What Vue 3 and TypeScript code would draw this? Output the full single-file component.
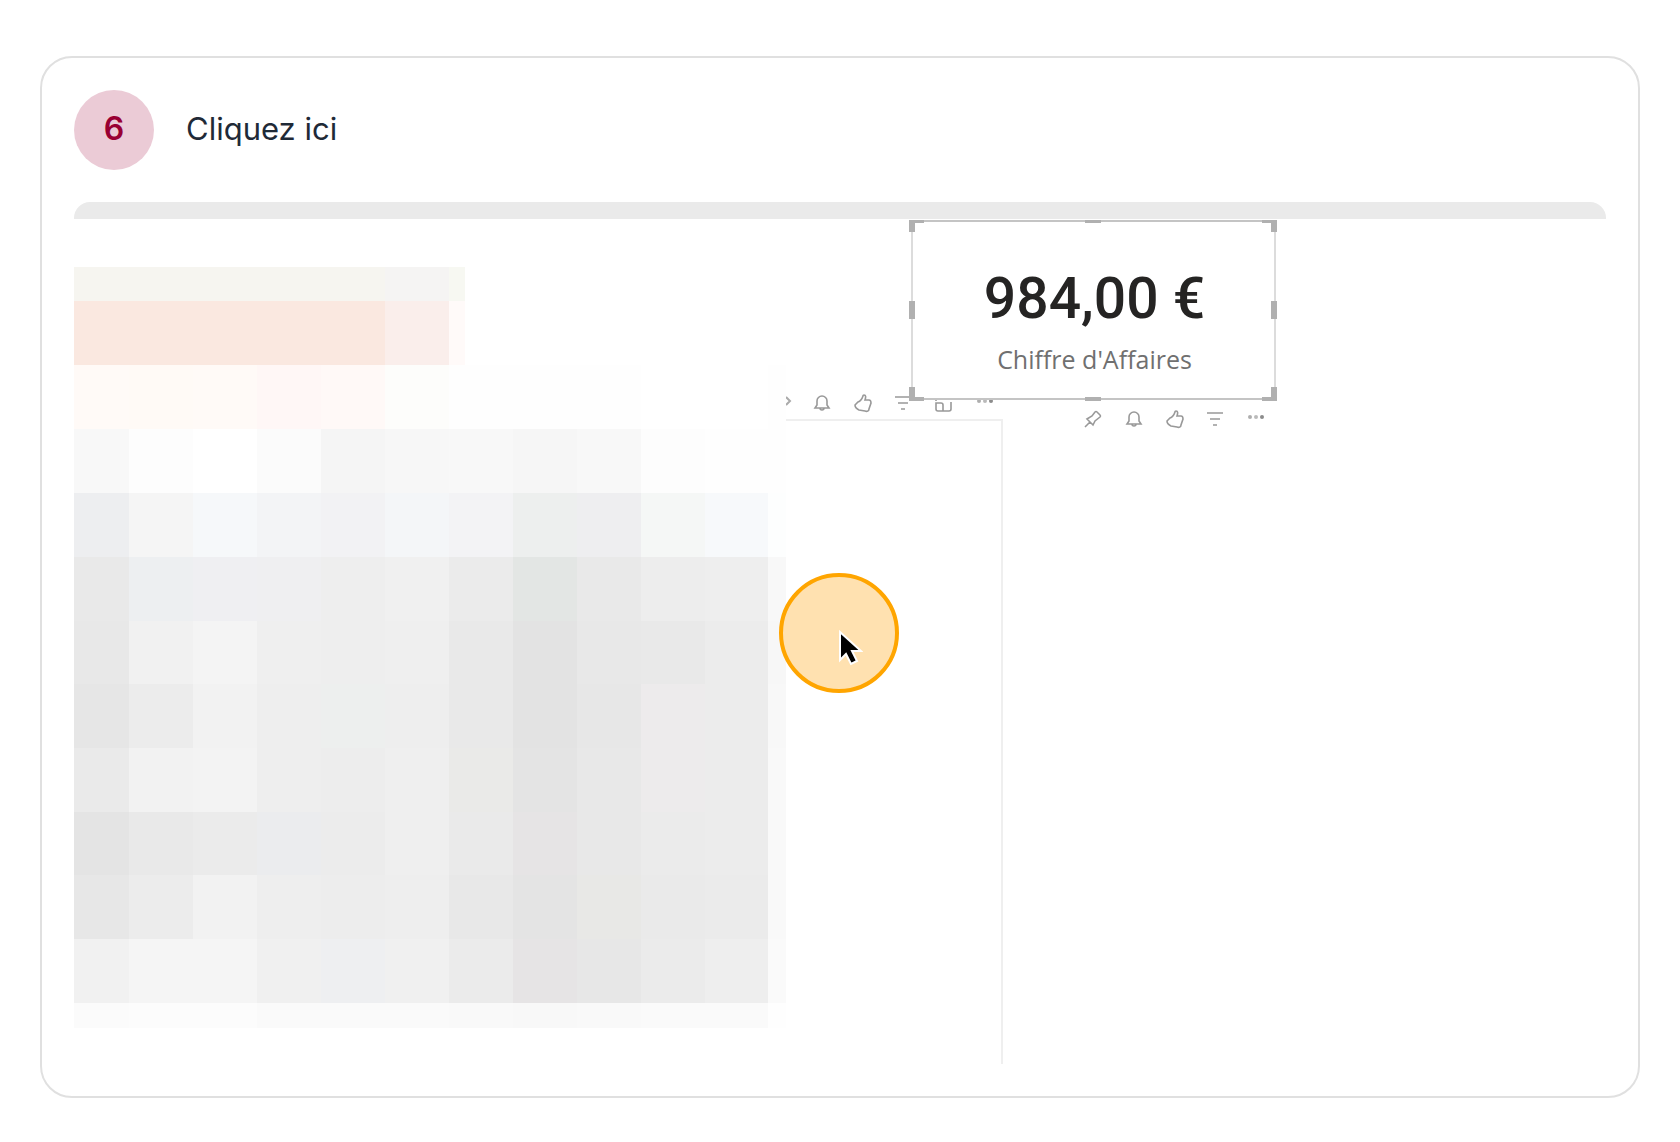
<script setup lang="ts">
type IconName = 'pin' | 'bell' | 'thumb' | 'filter' | 'focus' | 'more'

interface Tool {
  icon: IconName
  label: string
}

const tileTools: Tool[] = [
  { icon: 'bell', label: 'Alerte' },
  { icon: 'thumb', label: 'Aimer' },
  { icon: 'filter', label: 'Filtres' },
  { icon: 'focus', label: 'Mode focus' },
  { icon: 'more', label: "Plus d'options" },
]

const cardTools: Tool[] = [
  { icon: 'pin', label: 'Épingler' },
  { icon: 'bell', label: 'Alerte' },
  { icon: 'thumb', label: 'Aimer' },
  { icon: 'filter', label: 'Filtres' },
  { icon: 'more', label: "Plus d'options" },
]

const strokes: Record<IconName, string> = {
  pin: 'M2 18l5-5M4 10l6 6 2-4 5-4q1-1 0-2l-3-3q-1-1-2 0L9 7z',
  bell: 'M3 15h14l-2-3V8a5 5 0 0 0-10 0v4zM8 15a2 2 0 0 0 4 0',
  thumb: 'M11 2c2 0 2 2 1 5h4c2 0 2 2 2 3l-2 6c0 2-2 3-4 2l-6-1c-2-1-4-3-4-5l3-3c3-1 4-3 5-6q0-1 1-1z',
  filter: 'M1 4h16M4 10h10M7 16h4',
  focus: 'M1 8V3h4M8 3h3M14 3h2v4M16 9v7q0 2-2 2H3q-2 0-2-2v-6h5q2 0 2 2v6',
  more: '',
}

/* Redacted area: one row of colours per band, columns as in the grid tracks */
const mosaic: string[][] = [
  ['#f6f5f0', '#f6f5f0', '#f6f5f0', '#f6f5f0', '#f6f5f0', '#f5f4f3', '#f7f8f2', '#fff', '#fff', '#fff', '#fff', '#fff', '#fff'],
  ['#fae8e0', '#fae8e0', '#fae8e0', '#fae8e0', '#fae8e0', '#faeeeb', '#fffaf9', '#fff', '#fff', '#fff', '#fff', '#fff', '#fff'],
  ['#fffaf7', '#fffaf6', '#fffaf7', '#fff7f6', '#fff9f7', '#fdfdfb', '#fefefe', '#fefefe', '#fefefe', '#fefefe', '#fff', '#fff', '#fefefe'],
  ['#f8f8f8', '#fdfdfd', '#fff', '#fbfbfb', '#f5f5f5', '#f7f7f7', '#f8f8f8', '#f8f8f8', '#f6f6f6', '#f8f8f8', '#fdfdfd', '#fefefe', '#fefefe'],
  ['#edeef0', '#f5f5f5', '#f6f8fa', '#f3f4f6', '#f2f2f4', '#f4f6f8', '#f3f3f5', '#f3f3f5', '#edefee', '#eeeef0', '#f5f7f6', '#f7f9fb', '#fdfefe'],
  ['#e9e9e9', '#edeff1', '#efeff2', '#efeff1', '#eeeeee', '#f0f0f0', '#ebebeb', '#ebebeb', '#e3e6e4', '#e9e9e9', '#ededed', '#eeeeee', '#f8f8f8'],
  ['#e8e8e8', '#f1f1f1', '#f4f4f4', '#efefef', '#eeeeee', '#efefef', '#e9e9e9', '#e9e9e9', '#e3e3e3', '#e8e8e8', '#e9e9e9', '#ececec', '#f7f7f7'],
  ['#e6e6e6', '#ececec', '#f2f2f2', '#eeeeee', '#edefee', '#eeeeee', '#e9e9e9', '#e9e9e9', '#e3e3e3', '#e7e7e7', '#edebec', '#ececec', '#f8f8f8'],
  ['#eaeaea', '#f2f2f2', '#f3f3f3', '#eeeeee', '#ededed', '#efefef', '#eaeae8', '#eaeae8', '#e4e4e4', '#e8e8e8', '#edebec', '#ececec', '#f9f9f9'],
  ['#e4e4e4', '#e9e9e9', '#ebebeb', '#ebecee', '#ececec', '#efefef', '#eaeaea', '#eaeaea', '#e6e4e5', '#e8e8e8', '#ebebeb', '#ececec', '#f9f9f9'],
  ['#e7e7e7', '#ececec', '#f2f2f2', '#eeeeee', '#ededed', '#eeeeee', '#e8e8e8', '#e8e8e8', '#e4e4e4', '#e8e8e6', '#eaeaea', '#ebebeb', '#f9f9f9'],
  ['#f1f1f1', '#f5f5f5', '#f5f5f5', '#f0f0f0', '#eeeff1', '#f0f0f0', '#ebebeb', '#ebebeb', '#e6e4e5', '#e7e7e7', '#ebebeb', '#eeeeee', '#fafafa'],
  ['#fbfbfb', '#fcfcfc', '#fcfcfc', '#fafafa', '#fafafa', '#fafafa', '#f9f9f9', '#f9f9f9', '#f8f8f8', '#f9f9f9', '#fafafa', '#fafafa', '#fefefe'],
]
const cells: string[] = mosaic.flat()
</script>

<template>
  <main class="page">
    <article class="step">
      <header class="step-head">
        <span class="number">6</span>
        <h1 class="title">Cliquez ici</h1>
      </header>

      <div class="shot">
        <div class="bar"></div>
        <div class="mosaic" aria-hidden="true">
          <i v-for="(color, n) in cells" :key="n" :style="{ background: color }"></i>
        </div>

        <div class="tile"></div>
        <svg class="chevron" viewBox="0 0 6 12" width="6" height="12"><path d="M0 2l4 4-4 4" /></svg>
        <div class="tools tile-tools">
          <button v-for="tool in tileTools" :key="tool.icon" type="button" :aria-label="tool.label">
            <svg viewBox="0 0 20 20" width="20" height="20">
              <path :d="strokes[tool.icon]" />
              <g v-if="tool.icon === 'more'" class="dots">
                <circle cx="3" cy="8" r="2" opacity=".7" />
                <circle cx="9" cy="8" r="2" opacity=".6" />
                <circle cx="15" cy="8" r="2" />
              </g>
            </svg>
          </button>
        </div>

        <section class="card">
          <strong class="value">984,00 €</strong>
          <span class="label">Chiffre d'Affaires</span>
          <svg class="handles" viewBox="0 0 368 182" width="368" height="182">
            <path d="M0 0h15v3H6v9H0zM353 0h15v12h-6V3h-9zM0 167h6v10h9v4H0zM362 167h6v14h-15v-4h9z" />
            <path d="M176 0h16v3h-16zM176 177h16v4h-16zM0 81h6v18H0zM362 81h6v18h-6z" />
          </svg>
        </section>
        <div class="tools card-tools">
          <button v-for="tool in cardTools" :key="tool.icon" type="button" :aria-label="tool.label">
            <svg viewBox="0 0 20 20" width="20" height="20">
              <path :d="strokes[tool.icon]" />
              <g v-if="tool.icon === 'more'" class="dots">
                <circle cx="3" cy="8" r="2" opacity=".7" />
                <circle cx="9" cy="8" r="2" opacity=".6" />
                <circle cx="15" cy="8" r="2" />
              </g>
            </svg>
          </button>
        </div>

        <div class="marker">
          <svg class="cursor" viewBox="0 0 24 38" width="24" height="38">
            <path d="M1 3v28l6-6 5 10 6-3-5-10h9z" />
          </svg>
        </div>
      </div>
    </article>
  </main>
</template>

<style>
body {
  margin: 0;
  background: #fff;
}
</style>

<style scoped>
.page {
  padding: 56px 40px 44px;
  font-family: Inter, "Liberation Sans", sans-serif;
}
.step {
  box-sizing: border-box;
  display: flex;
  flex-direction: column;
  gap: 32px;
  padding: 32px;
  border: 2px solid #e0e0e0;
  border-radius: 32px;
}
.step-head {
  display: flex;
  align-items: center;
  gap: 32px;
  line-height: 40px;
}
.number {
  box-sizing: border-box;
  width: 80px;
  height: 80px;
  padding: 19px 0;
  border-radius: 50%;
  background: #ebcbd6;
  color: #990033;
  font-size: 32px;
  font-weight: 600;
  text-align: center;
}
.title {
  margin: 0;
  padding-bottom: 2px;
  color: #1f2a37;
  font-size: 31px;
  font-weight: 400;
}
.shot {
  position: relative;
  overflow: hidden;
  padding-bottom: 36px;
  border-radius: 16px 16px 0 0;
}
.bar {
  height: 17px;
  background: #eaeaea;
}
.mosaic {
  display: grid;
  grid-template-columns: 55px repeat(5, 64px) 16px 48px repeat(3, 64px) 63px 18px;
  grid-template-rows: 34px repeat(5, 64px) 63px 64px 64px 63px 64px 64px 25px;
  margin-top: 48px;
}
.tile {
  position: absolute;
  top: 217px;
  bottom: 0;
  left: 712px;
  width: 215px;
  border: solid #efefef;
  border-width: 2px 2px 0 0;
}
.chevron {
  position: absolute;
  top: 193px;
  left: 712px;
  fill: none;
  stroke: #aaa;
  stroke-width: 2;
}
.tools {
  position: absolute;
  display: flex;
  gap: 21px;
}
.tile-tools {
  top: 191px;
  left: 738px;
}
.card-tools {
  top: 207px;
  left: 1009px;
}
.tools button {
  display: block;
  padding: 0;
  border: 0;
  background: none;
}
.tools svg {
  display: block;
  fill: none;
  stroke: #999;
  stroke-width: 1.6;
}
.tools .dots {
  fill: #8c8c8c;
  stroke: none;
}
.card {
  position: absolute;
  top: 18px;
  left: 837px;
  box-sizing: border-box;
  display: flex;
  flex-direction: column;
  align-items: center;
  width: 365px;
  height: 180px;
  padding: 41px 0 0 2px;
  border: 2px solid #dcdcdc;
  border-top-color: #c4c4c4;
  border-bottom-color: #c4c4c4;
  background: #fff;
}
.value {
  color: #252423;
  font-family: Roboto, sans-serif;
  font-size: 57px;
  font-weight: 500;
  line-height: 72px;
}
.label {
  padding-top: 4px;
  color: #707070;
  font-family: "Open Sans", "Noto Sans", sans-serif;
  font-size: 25px;
  line-height: 40px;
}
.handles {
  position: absolute;
  top: -2px;
  left: -4px;
  fill: #b0b0b0;
}
.marker {
  position: absolute;
  top: 50%;
  left: 50%;
  box-sizing: border-box;
  width: 120px;
  height: 120px;
  margin: -60px 0 0 -61px;
  border: 4px solid #ffa500;
  border-radius: 50%;
  background: #ffe1b0;
}
.cursor {
  position: absolute;
  top: 50%;
  left: 50%;
  margin-top: -4px;
  fill: #000;
  stroke: #fff;
  stroke-width: 2;
}
</style>
